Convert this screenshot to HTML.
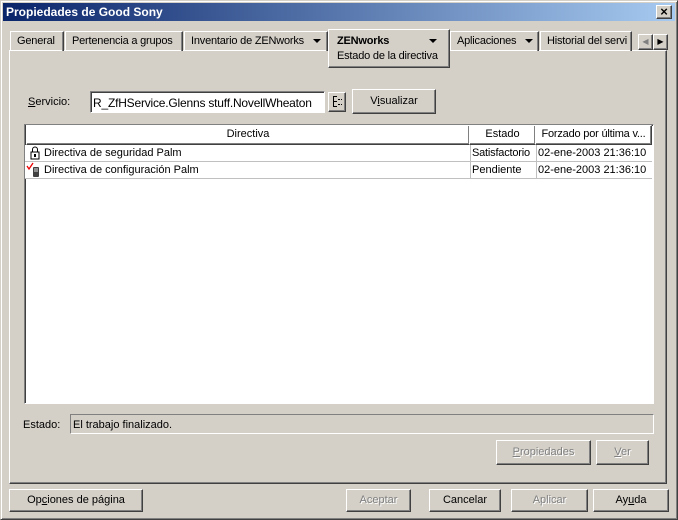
<!DOCTYPE html>
<html><head><style>
*{box-sizing:border-box;margin:0;padding:0}
body{width:678px;height:520px;background:#d4d0c8;font-family:"Liberation Sans",sans-serif;font-size:11px;color:#000;position:relative;overflow:hidden}
.a{position:absolute}
.win{left:0;top:0;width:678px;height:520px;border:1px solid;border-color:#d4d0c8 #404040 #404040 #d4d0c8;box-shadow:inset 1px 1px #fff,inset -1px -1px #808080}
.title{left:3px;top:3px;width:672px;height:18px;background:linear-gradient(90deg,#0a246a,#a6caf0);color:#fff;font-weight:bold;font-size:12px;padding:2px 3px;line-height:14px}
.btn{position:absolute;border:1px solid;border-color:#fff #404040 #404040 #fff;box-shadow:inset -1px -1px #808080;text-align:center;background:#d4d0c8;white-space:nowrap}
.dis{color:#808080;text-shadow:1px 1px #fff}
.sunk{position:absolute;border:1px solid;border-color:#808080 #fff #fff #808080;box-shadow:inset 1px 1px #404040}
.tab{position:absolute;top:31px;height:20px;border:1px solid;border-bottom:none;border-color:#fff #404040 #404040 #fff;padding:3px 0 0 6px;white-space:nowrap;overflow:hidden;box-shadow:inset -1px 0 #808080;letter-spacing:-0.2px}
.hd{position:absolute;top:0;height:20px;border:1px solid;border-color:#fff #404040 #404040 #fff;box-shadow:inset -1px -1px #808080;text-align:center;line-height:17px;white-space:nowrap;overflow:hidden}
.row{position:absolute;left:0;width:627px;height:17px;border-bottom:1px solid #c0c0c0;background:#fff}
.row span{position:absolute;top:2px;white-space:nowrap}
.tri{display:inline-block;width:0;height:0;border-left:4px solid transparent;border-right:4px solid transparent;border-top:4px solid #000;vertical-align:middle;margin-left:6px}
</style></head><body>
<div class="a win"></div>
<div class="a title">Propiedades de Good Sony</div>
<div class="btn" style="left:656px;top:5px;width:16px;height:14px;line-height:11px;font-size:13px;font-weight:bold">×</div>

<div class="a" style="left:9px;top:50px;width:658px;height:434px;border:1px solid;border-color:#fff #404040 #404040 #fff;box-shadow:inset -1px -1px #808080"></div>

<div class="tab" style="left:10px;width:54px">General</div>
<div class="tab" style="left:65px;width:118px">Pertenencia a grupos</div>
<div class="tab" style="left:184px;width:144px">Inventario de ZENworks <span class="tri"></span></div>
<div class="tab" style="left:450px;width:89px">Aplicaciones <span class="tri"></span></div>
<div class="tab" style="left:540px;width:92px">Historial del servi</div>
<div class="a" style="left:328px;top:29px;width:122px;height:39px;background:#d4d0c8;border:1px solid;border-color:#fff #404040 #404040 #fff;box-shadow:inset -1px -1px #808080;padding:4px 0 0 8px;line-height:15px;white-space:nowrap;letter-spacing:-0.2px"><b>ZENworks</b><span class="tri" style="margin-left:40px"></span><br>Estado de la directiva</div>
<div class="btn" style="left:638px;top:34px;width:15px;height:16px;color:#808080;font-size:8px;line-height:14px">◀</div>
<div class="btn" style="left:653px;top:34px;width:15px;height:16px;font-size:8px;line-height:14px">▶</div>

<div class="a" style="left:28px;top:96px"><u>S</u>ervicio:</div>
<div class="sunk" style="left:90px;top:91px;width:235px;height:22px;background:#fff;padding:4px 2px;font-size:12px;white-space:nowrap;overflow:hidden;letter-spacing:-0.2px">R_ZfHService.Glenns stuff.NovellWheaton</div>
<div class="btn" style="left:328px;top:92px;width:18px;height:20px">
<svg width="16" height="18" viewBox="0 0 16 18"><g fill="#000"><rect x="4" y="3" width="1" height="11"/><rect x="4" y="3" width="4" height="1"/><rect x="5" y="8" width="3" height="1"/><rect x="5" y="13" width="3" height="1"/><rect x="9" y="6" width="2" height="1"/><rect x="9" y="11" width="2" height="1"/><rect x="12" y="6" width="1" height="1"/><rect x="12" y="11" width="1" height="1"/></g></svg></div>
<div class="btn" style="left:352px;top:89px;width:84px;height:25px;line-height:22px">V<u>i</u>sualizar</div>

<div class="sunk" style="left:24px;top:124px;width:630px;height:280px;background:#fff">
 <div class="hd" style="left:1px;width:444px">Directiva</div>
 <div class="hd" style="left:444px;width:67px">Estado</div>
 <div class="hd" style="left:510px;width:117px;letter-spacing:-0.2px">Forzado por última v...</div>
 <div class="row" style="top:20px"><span style="left:4px;top:1px"><svg width="12" height="14"><rect x="2" y="6" width="8" height="7" fill="#fff" stroke="#000"/><path d="M3.5 6V3.5a2.5 2.5 0 015 0V6" fill="none" stroke="#000"/><rect x="5" y="8" width="2" height="3" fill="#000"/></svg></span><span style="left:19px">Directiva de seguridad Palm</span><span style="left:445px;border-left:1px solid #c0c0c0;padding-left:1px;top:0;height:16px;padding-top:2px;letter-spacing:-0.2px">Satisfactorio</span><span style="left:511px;border-left:1px solid #c0c0c0;padding-left:1px;top:0;height:16px;padding-top:2px">02-ene-2003 21:36:10</span></div>
 <div class="row" style="top:37px"><span style="left:1px;top:0"><svg width="16" height="16"><path d="M1 4L3 7L7 1" fill="none" stroke="#e00" stroke-width="1.3"/><rect x="7" y="5" width="6" height="10" rx="1" fill="#404040"/><rect x="8" y="6" width="4" height="4" fill="#909090"/></svg></span><span style="left:19px">Directiva de configuración Palm</span><span style="left:445px;border-left:1px solid #c0c0c0;padding-left:1px;top:0;height:16px;padding-top:2px">Pendiente</span><span style="left:511px;border-left:1px solid #c0c0c0;padding-left:1px;top:0;height:16px;padding-top:2px">02-ene-2003 21:36:10</span></div>
</div>

<div class="a" style="left:23px;top:419px">Estado:</div>
<div class="a" style="left:70px;top:414px;width:584px;height:20px;border:1px solid;border-color:#808080 #fff #fff #808080;padding:4px 2px">El trabajo finalizado.</div>
<div class="btn dis" style="left:496px;top:440px;width:95px;height:25px;line-height:22px"><u>P</u>ropiedades</div>
<div class="btn dis" style="left:596px;top:440px;width:53px;height:25px;line-height:22px"><u>V</u>er</div>

<div class="btn" style="left:9px;top:489px;width:134px;height:23px;line-height:20px">Op<u>c</u>iones de página</div>
<div class="btn dis" style="left:346px;top:489px;width:65px;height:23px;line-height:20px">Aceptar</div>
<div class="btn" style="left:429px;top:489px;width:72px;height:23px;line-height:20px">Cancelar</div>
<div class="btn dis" style="left:511px;top:489px;width:77px;height:23px;line-height:20px">Aplicar</div>
<div class="btn" style="left:593px;top:489px;width:76px;height:23px;line-height:20px">Ay<u>u</u>da</div>
</body></html>
